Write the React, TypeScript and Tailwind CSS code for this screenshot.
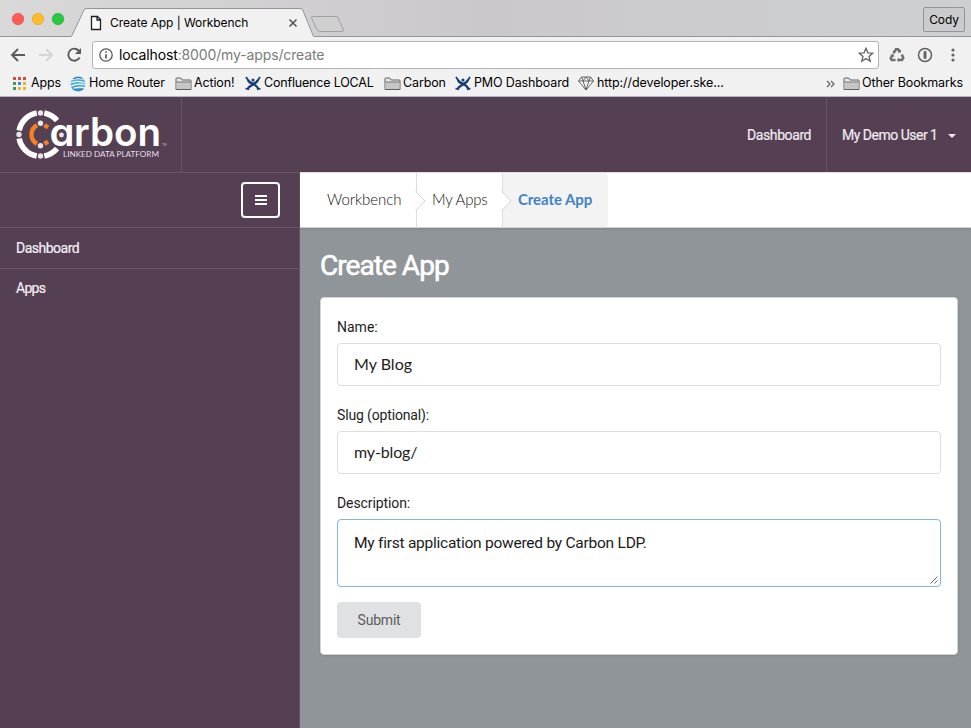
import React from "react";

function Folder() {
  return (
    <svg className="h-[14px] w-[17px] shrink-0" viewBox="0 0 17 14" fill="none">
      <path d="M1 12.5V1.8Q1 1 1.8 1H5.7L7.2 3H15.2Q16 3 16 3.8V12.5Z" fill="#e6e6e6" stroke="#5f5f5f" />
      <path d="M1.5 5H15.5V12H1.5Z" fill="#c6c6c6" />
      <path d="M1 5H16" stroke="#777" />
      <path d="M1 12.5H16" stroke="#5f5f5f" />
    </svg>
  );
}

function Confluence() {
  return (
    <svg className="h-[15px] w-[16px] shrink-0" viewBox="0 0 16 15" fill="none" stroke="#153f74">
      <path d="M3 4Q4 6.500 8 8T13.500 13" strokeWidth="2.300" />
      <path d="M13 4Q12 6.500 8 8.500T2.500 13" strokeWidth="2.300" />
      <path d="M0.500 12.500L4 13.500M12 13.500L15.500 12.500M1 1L4 5.500M15 1L12 5.500" strokeWidth="1.800" />
      <circle cx="8" cy="4" r="1.500" fill="#153f74" stroke="none" />
      <path d="M6 6L8 8L10 6" strokeWidth="1.500" />
    </svg>
  );
}

function AppsGrid() {
  const colors = ["#d64c3f", "#d64c3f", "#d64c3f", "#3e9b57", "#4a86dc", "#e9b23c", "#3e9b57", "#e9b23c", "#e9b23c"];
  return (
    <svg className="size-[14px] shrink-0" viewBox="0 0 14 14" shapeRendering="crispEdges">
      {colors.map((c, i) => (
        <rect key={i} x={1 + (i % 3) * 5} y={Math.floor(i / 3) * 5} width="3" height="3" fill={c} />
      ))}
    </svg>
  );
}

function Globe() {
  return (
    <svg className="size-[16px] shrink-0" viewBox="0 0 16 16" fill="none">
      <circle cx="8" cy="8" r="7.5" fill="#4aa9d8" />
      <path d="M1.6 4Q7 1.6 13.5 3.2M0.6 7Q7 3.6 15.4 7M0.8 10.2Q8 6.6 15.4 9M2 13Q8 10 14.8 11.6" stroke="#f0f8fc" strokeWidth="1.3" />
      <path d="M3 2.8Q8 .4 12.4 2.2M2.3 12.6Q8 15.6 13 13.4" stroke="#1d78b0" />
    </svg>
  );
}

function TabStrip() {
  return (
    <div className="relative flex h-[37px] items-center bg-linear-to-r from-[#d9d9d9] via-[#cbc8cb] to-[#cdd0d2]">
      <svg className="absolute inset-0 h-[37px] w-[971px]" viewBox="0 0 971 37" fill="none">
        <path d="M71 37L84 10Q84.6 8.5 87 8.5H300Q302 8.5 302.7 10L314 37Z" fill="#f1f1f1" />
        <path d="M0 36.5H71.5L84 10Q84.6 8.5 87 8.5H300Q302 8.5 302.7 10L313.5 36.5H971" stroke="#949496" />
        <path d="M313 16.5H336Q337.500 16.500 338 18L343.500 30Q344 31.500 342 31.500H320Q318 31.500 317.300 30L311.500 18Q311 16.500 313 16.500Z" fill="#cfcfd0" stroke="#a0a0a2" />
        <circle cx="18" cy="19" r="5.8" fill="#fc5b57" stroke="#df4744" strokeWidth=".6" />
        <circle cx="38" cy="19" r="5.800" fill="#fdbc2e" stroke="#dd9f2a" strokeWidth=".6" />
        <circle cx="58" cy="19" r="5.8" fill="#27c83f" stroke="#24a934" strokeWidth=".6" />
        <path d="M91.500 16.500H97.500L100.500 19.500V29.500H91.500ZM97 16.500V20H100.500" fill="#fff" stroke="#222" strokeWidth="1.3" />
        <path d="M289.500 19.500L296.500 26.500M296.500 19.500L289.500 26.500" stroke="#555" strokeWidth="1.6" />
      </svg>
      <div className="relative mt-[9px] ml-[110px] text-[12px] tracking-[-0.070px]">Create App | Workbench</div>
      <div className="relative mt-[2px] mr-[6px] ml-auto flex h-[25px] w-[42px] items-center justify-center rounded-[2px] border border-[#929496] bg-[#c9cbcd] text-[12px] tracking-[-0.150px]">Cody</div>
    </div>
  );
}

function Toolbar() {
  return (
    <div className="flex h-[35px] items-center">
      <svg className="ml-[8px] h-[20px] w-[76px] shrink-0" viewBox="0 0 76 20" fill="none" strokeWidth="1.9">
        <path d="M17 10H4M10 4L4 10L10 16" stroke="#5b5b5b" />
        <path d="M31 10H44M38 4L44 10L38 16" stroke="#d5d5d5" />
        <path d="M71.200 6.200A6 6 0 1 0 71.600 12.500" stroke="#5b5b5b" />
        <path d="M73 3V9H67Z" fill="#5b5b5b" />
      </svg>
      <div className="ml-[8px] flex h-[28px] w-[787px] items-center rounded-[3px] border border-[#b3b3b3] bg-white">
        <svg className="ml-[6px] size-[14px]" viewBox="0 0 14 14" fill="none" stroke="#555" strokeWidth="1.3">
          <circle cx="7" cy="7" r="6.2" />
          <path d="M7 6.200V10.500M7 3.300V4.800" strokeWidth="1.600" />
        </svg>
        <div className="ml-[6px] text-[14px] tracking-[-0.130px]">
          localhost<span className="text-[#7b7b7b]">:8000/my-apps/create</span>
        </div>
        <svg className="mr-[4px] ml-auto size-[16px]" viewBox="0 0 16 16" fill="none" stroke="#606060" strokeWidth="1.3">
          <path d="M8 1.300L9.900 5.800L14.700 6.200L11 9.400L12.200 14.200L8 11.600L3.800 14.200L5 9.400L1.300 6.200L6.100 5.800Z" />
        </svg>
      </div>
      <svg className="ml-[10px] size-[16px]" viewBox="0 0 16 16" fill="none" stroke="#68717a" strokeWidth="2.500">
        <path d="M4.300 6.200L7 2.200H9L10.700 5M12.800 7.500L14.300 11L13 13H9M6.500 13H2.700L1.700 11.200L3.500 8" />
        <path d="M8.500 5.500H12V2.500ZM10 10.500V15L7.800 13ZM1 8L4.500 7L5.300 10Z" fill="#68717a" stroke="none" />
      </svg>
      <svg className="ml-[12px] size-[16px]" viewBox="0 0 16 16" fill="none" stroke="#606060">
        <circle cx="8" cy="8" r="6.500" strokeWidth="1.500" />
        <path d="M8 4.200V11.800" strokeWidth="2.800" />
      </svg>
      <svg className="ml-[18px] h-[16px] w-[4px]" viewBox="0 0 4 16" fill="#666">
        <circle cx="2" cy="3" r="1.600" /><circle cx="2" cy="8" r="1.600" /><circle cx="2" cy="13" r="1.600" />
      </svg>
    </div>
  );
}

function Bookmarks() {
  return (
    <div className="flex h-[25px] items-center border-b border-[#b9b4ba] pb-px pl-[12px] text-[12.500px] tracking-[-0.130px] whitespace-nowrap">
      <AppsGrid />
      <span className="ml-[5px] w-[39px]">Apps</span>
      <Globe />
      <span className="ml-[3px] w-[86px]">Home Router</span>
      <Folder />
      <span className="ml-[2px] w-[51px]">Action!</span>
      <Confluence />
      <span className="ml-[3px] w-[120px] tracking-[-0.180px]">Confluence LOCAL</span>
      <Folder />
      <span className="ml-[2px] w-[52px]">Carbon</span>
      <Confluence />
      <span className="ml-[3px] w-[104px]">PMO Dashboard</span>
      <svg className="h-[15px] w-[16px] shrink-0" viewBox="0 0 16 15" fill="#fafafa" stroke="#555" strokeWidth=".9">
        <path d="M3.500 1H12.500L15.500 5L8 14L.5 5ZM.5 5H15.500M3.500 1L5 5L8 14L11 5L12.500 1M5 5L8 1L11 5" />
      </svg>
      <span className="ml-[3px] tracking-[-0.080px]">http://developer.ske...</span>
      <svg className="mr-[8px] ml-auto h-[8px] w-[9px]" viewBox="0 0 9 8" fill="none" stroke="#666" strokeWidth="1.300">
        <path d="M1 1L4 4L1 7M5 1L8 4L5 7" />
      </svg>
      <Folder />
      <span className="mr-[8px] ml-[2px] w-[101px]">Other Bookmarks</span>
    </div>
  );
}

function Logo() {
  return (
    <svg className="h-[75px] w-[181px]" viewBox="0 97 181 75" fill="none">
      <path d="M19.200 130.500A21.800 21.800 0 0 1 36.700 113M44.300 113A21.800 21.800 0 0 1 57 120.500M19.200 138.500A21.800 21.800 0 0 0 36.700 156M44.300 156A21.800 21.800 0 0 0 57 148.500" stroke="#fff" strokeWidth="5.600" />
      <path d="M37 125.200A10.600 10.600 0 0 0 37 143.800M44.500 125L48 127.500M44.500 144L48 141.500" stroke="#f58220" strokeWidth="4.400" />
      <text x="49.500" y="146" textLength="25" lengthAdjust="spacingAndGlyphs" fill="#fff" className="font-['Inter',sans-serif] text-[39px] font-semibold [font-feature-settings:'cv11']">a</text>
      <text x="74" y="146" textLength="87" lengthAdjust="spacingAndGlyphs" fill="#fff" className="font-['Inter',sans-serif] text-[39px] font-semibold">rbon</text>
      <g fill="#e9e4ea">
        <circle cx="40.500" cy="113" r="2.700" /><circle cx="19" cy="134.500" r="2.700" /><circle cx="40.500" cy="156" r="2.700" />
        <circle cx="40.500" cy="123.300" r="2.700" /><circle cx="40.500" cy="145.800" r="2.700" /><circle cx="61.500" cy="135" r="2.400" />
      </g>
      <text x="63" y="156.500" textLength="96" lengthAdjust="spacingAndGlyphs" fill="#e6dfe7" className="font-['Lato',sans-serif] text-[8.200px]">LINKED DATA PLATFORM</text>
      <text x="162" y="146" fill="#cfc5d0" className="font-['Lato',sans-serif] text-[3px]">TM</text>
    </svg>
  );
}

function Header() {
  return (
    <header className="flex h-[75px] bg-[#544052] text-[14px] text-[#f1e9f1]">
      <div className="h-[75px] w-[182px] border-r border-[#655363]"><Logo /></div>
      <div className="ml-auto flex items-center border-r border-[#655363] pt-[2px] pr-[15px] [-webkit-text-stroke:0.2px]">
        <span className="w-[64px] tracking-[-0.400px]">Dashboard</span>
      </div>
      <div className="flex w-[144px] items-center pt-[2px] pl-[15px] [-webkit-text-stroke:0.2px]">
        <span className="w-[106px] shrink-0 tracking-[-0.500px] whitespace-nowrap">My Demo User 1</span>
        <svg className="h-[4px] w-[8px] shrink-0" viewBox="0 0 8 4"><path d="M0 0H8L4 4Z" fill="#eee5ee" /></svg>
      </div>
    </header>
  );
}

function Sidebar() {
  return (
    <aside className="h-[556px] w-[300px] shrink-0 border-t border-r border-[#655363] bg-[#544052] text-[14px] text-[#f6eef6] [-webkit-text-stroke:0.2px]">
      <div className="flex h-[54px] justify-end pt-[9px] pr-[19px]">
        <button className="flex h-[36px] w-[39px] items-center justify-center rounded-[4px] border-2 border-white">
          <svg className="h-[10px] w-[12px]" viewBox="0 0 12 10" stroke="#fff" strokeWidth="2"><path d="M0 1H12M0 5H12M0 9H12" /></svg>
        </button>
      </div>
      <div className="flex h-[42px] items-center border-y border-[#655363] pl-[16px] tracking-[-0.500px]">Dashboard</div>
      <div className="flex h-[39px] items-center pl-[16px] tracking-[-0.700px]">Apps</div>
    </aside>
  );
}

function Arrow() {
  return (
    <svg className="absolute top-[17px] -right-[10px] z-10 h-[22px] w-[11px]" viewBox="0 0 11 22" fill="none">
      <path d="M0 1L10 11L0 21Z" fill="#fff" /><path d="M.5 1L10 11L.5 21" stroke="#d4d4d4" />
    </svg>
  );
}

function Breadcrumb() {
  return (
    <nav className="flex h-[56px] border-t border-b border-t-[#e3dee3] border-b-[#d0d2d3] bg-white font-['Lato',sans-serif] text-[15px] whitespace-nowrap text-[#111] shadow-[0_1px_2px_rgba(34,36,38,0.15)]">
      <div className="relative flex w-[117px] items-center border-r border-[#dedede] pb-[2px] pl-[27px]"><span className="font-light tracking-[-0.050px]">Workbench</span><Arrow /></div>
      <div className="relative flex w-[86px] items-center border-r border-[#dedede] pb-[2px] pl-[15px]"><span className="font-light tracking-[-0.200px]">My Apps</span><Arrow /></div>
      <div className="flex w-[105px] items-center rounded-r-[4px] bg-[#f3f3f3] pb-[2px] pl-[15px] font-bold tracking-[-0.080px] text-[#4183c4]">Create App</div>
    </nav>
  );
}

function FormCard() {
  return (
    <form className="h-[358px] w-[638px] rounded-[4px] border border-[#d4d4d5] bg-white px-[16px] pt-[18px] text-[14px] text-[#1d1d1d] shadow-[0_1px_2px_rgba(34,36,38,0.15)]">
      <label className="block h-[27px] leading-[22px]">Name:</label>
      <div className="flex h-[43px] items-center rounded-[4px] border border-[#dedede] pb-[1px] pl-[16px] font-['Lato',sans-serif] text-[16px]"><span className="tracking-[0.010px]">My Blog</span></div>
      <label className="mt-[18px] block h-[27px] leading-[22px] tracking-[-0.150px]">Slug (optional):</label>
      <div className="flex h-[43px] items-center rounded-[4px] border border-[#dedede] pb-[1px] pl-[16px] font-['Lato',sans-serif] text-[16px]"><span className="tracking-[-0.150px]">my-blog/</span></div>
      <label className="mt-[18px] block h-[27px] leading-[22px] tracking-[-0.100px]">Description:</label>
      <div className="relative h-[68px] rounded-[4px] border border-[#85b7d9] pt-[12px] pl-[16px] text-[15.500px] leading-[22px] tracking-[-0.240px] text-[#1a1a1a]">
        My first application powered by Carbon LDP.
        <svg className="absolute right-[2px] bottom-[2px] size-[8px]" viewBox="0 0 8 8" stroke="#555" strokeWidth=".9"><path d="M.5 7.500L7.500 .5M4.500 7.500L7.500 4.500" /></svg>
      </div>
      <button type="button" className="mt-[15px] h-[36px] w-[84px] rounded-[4px] bg-[#e0e1e2] text-[14px] tracking-[-0.200px] text-[#5c5c5c]">Submit</button>
    </form>
  );
}

export default function App() {
  return (
    <div className="h-[728px] w-[971px] overflow-hidden bg-[#909599] font-['Roboto',sans-serif] text-black">
      <div className="h-[97px] bg-[#f1f1f1] font-['Inter',sans-serif]">
        <TabStrip />
        <Toolbar />
        <Bookmarks />
      </div>
      <Header />
      <div className="flex">
        <Sidebar />
        <main className="min-w-0 grow">
          <Breadcrumb />
          <div className="px-[20px]">
            <h1 className="h-[69px] pt-[21px] text-[28px] leading-[34px] tracking-[-0.950px] text-white [-webkit-text-stroke:0.600px]">Create App</h1>
            <FormCard />
          </div>
        </main>
      </div>
    </div>
  );
}
